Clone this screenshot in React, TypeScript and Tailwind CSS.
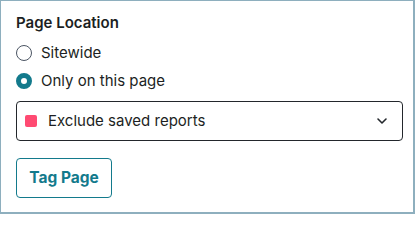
import React from "react";

export default function App() {
  return (
    <div className="w-[415px] h-[214px] bg-white border-[#8eafbe] border-l border-t border-r-2 border-b-2 box-border pl-[15px] pr-[10px] pt-[10px] font-['Inter',sans-serif] text-[#1c1f23]">
      <div className="h-6 leading-6 text-[15px] font-semibold">Page Location</div>
      <div className="mt-1 flex flex-col">
        <label className="h-7 flex items-center gap-[9px]">
          <span className="w-4 h-4 rounded-full border border-[#4b5563] box-border" />
          <span className="text-[15px] leading-6">Sitewide</span>
        </label>
        <label className="h-7 flex items-center gap-[9px]">
          <span className="w-4 h-4 rounded-full border-[5px] border-[#137a8c] box-border bg-white" />
          <span className="text-[15px] leading-6">Only on this page</span>
        </label>
      </div>
      <div className="mt-[6px] h-10 w-[387px] rounded-[4px] border border-[#23272c] flex items-center pl-[8px] pr-[14px]">
        <span className="w-3 h-3 rounded-[2px] bg-[#ff4a72]" />
        <span className="ml-[11px] text-[15px] leading-6 flex-1">Exclude saved reports</span>
        <svg width="12" height="8" viewBox="0 0 12 8" fill="none" className="text-[#23272c]">
          <path d="M2 2l4 4 4-4" stroke="currentColor" strokeWidth="1.6" strokeLinecap="round" strokeLinejoin="round" />
        </svg>
      </div>
      <button className="mt-[17px] h-10 w-24 rounded-[4px] border border-[#137a8c] text-[#137a8c] font-bold text-[15.5px] bg-white">
        Tag Page
      </button>
    </div>
  );
}
